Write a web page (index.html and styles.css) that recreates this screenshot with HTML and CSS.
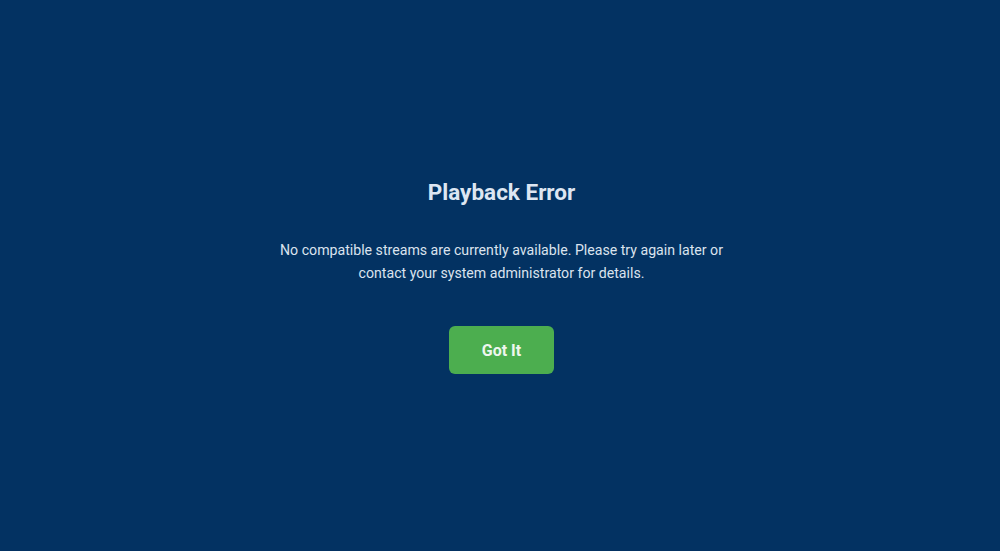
FILE: index.html
```html
<!DOCTYPE html>
<html lang="en">
<head>
  <meta charset="UTF-8">
  <title>Playback Error</title>
  <link rel="stylesheet" href="styles.css">
</head>
<body>

  <div class="error-box">
    <h2>Playback Error</h2>
    <p class="error-msg">
      No compatible streams are currently available. Please try again later or<br>
      contact your system administrator for details.
    </p>
    <button type="button">Got It</button>
  </div>

</body>
</html>
```

FILE: styles.css
```css
* {
  margin: 0;
  padding: 0;
  box-sizing: border-box;
  font-family: Roboto, "Liberation Sans", sans-serif;
}

body {
  background: #033262;
  min-height: 100vh;
  padding: 2px 0 0 3px;
  display: flex;
  justify-content: center;
  align-items: center;
}

.error-box {
  display: flex;
  flex-direction: column;
  align-items: center;
  text-align: center;
}

.error-box h2 {
  font-size: 22.5px;
  line-height: 26px;
  font-weight: 700;
  color: #dde6f2;
  margin-bottom: 34px;
}

.error-msg {
  font-size: 14.15px;
  line-height: 23px;
  color: #dbe3ee;
  margin-bottom: 41px;
}

button {
  width: 105px;
  height: 48px;
  font-size: 16px;
  font-weight: 700;
  background: #4cae4f;
  color: #eef6ee;
  border: none;
  border-radius: 6px;
  cursor: pointer;
}

button:hover {
  background: #449d47;
}
```
